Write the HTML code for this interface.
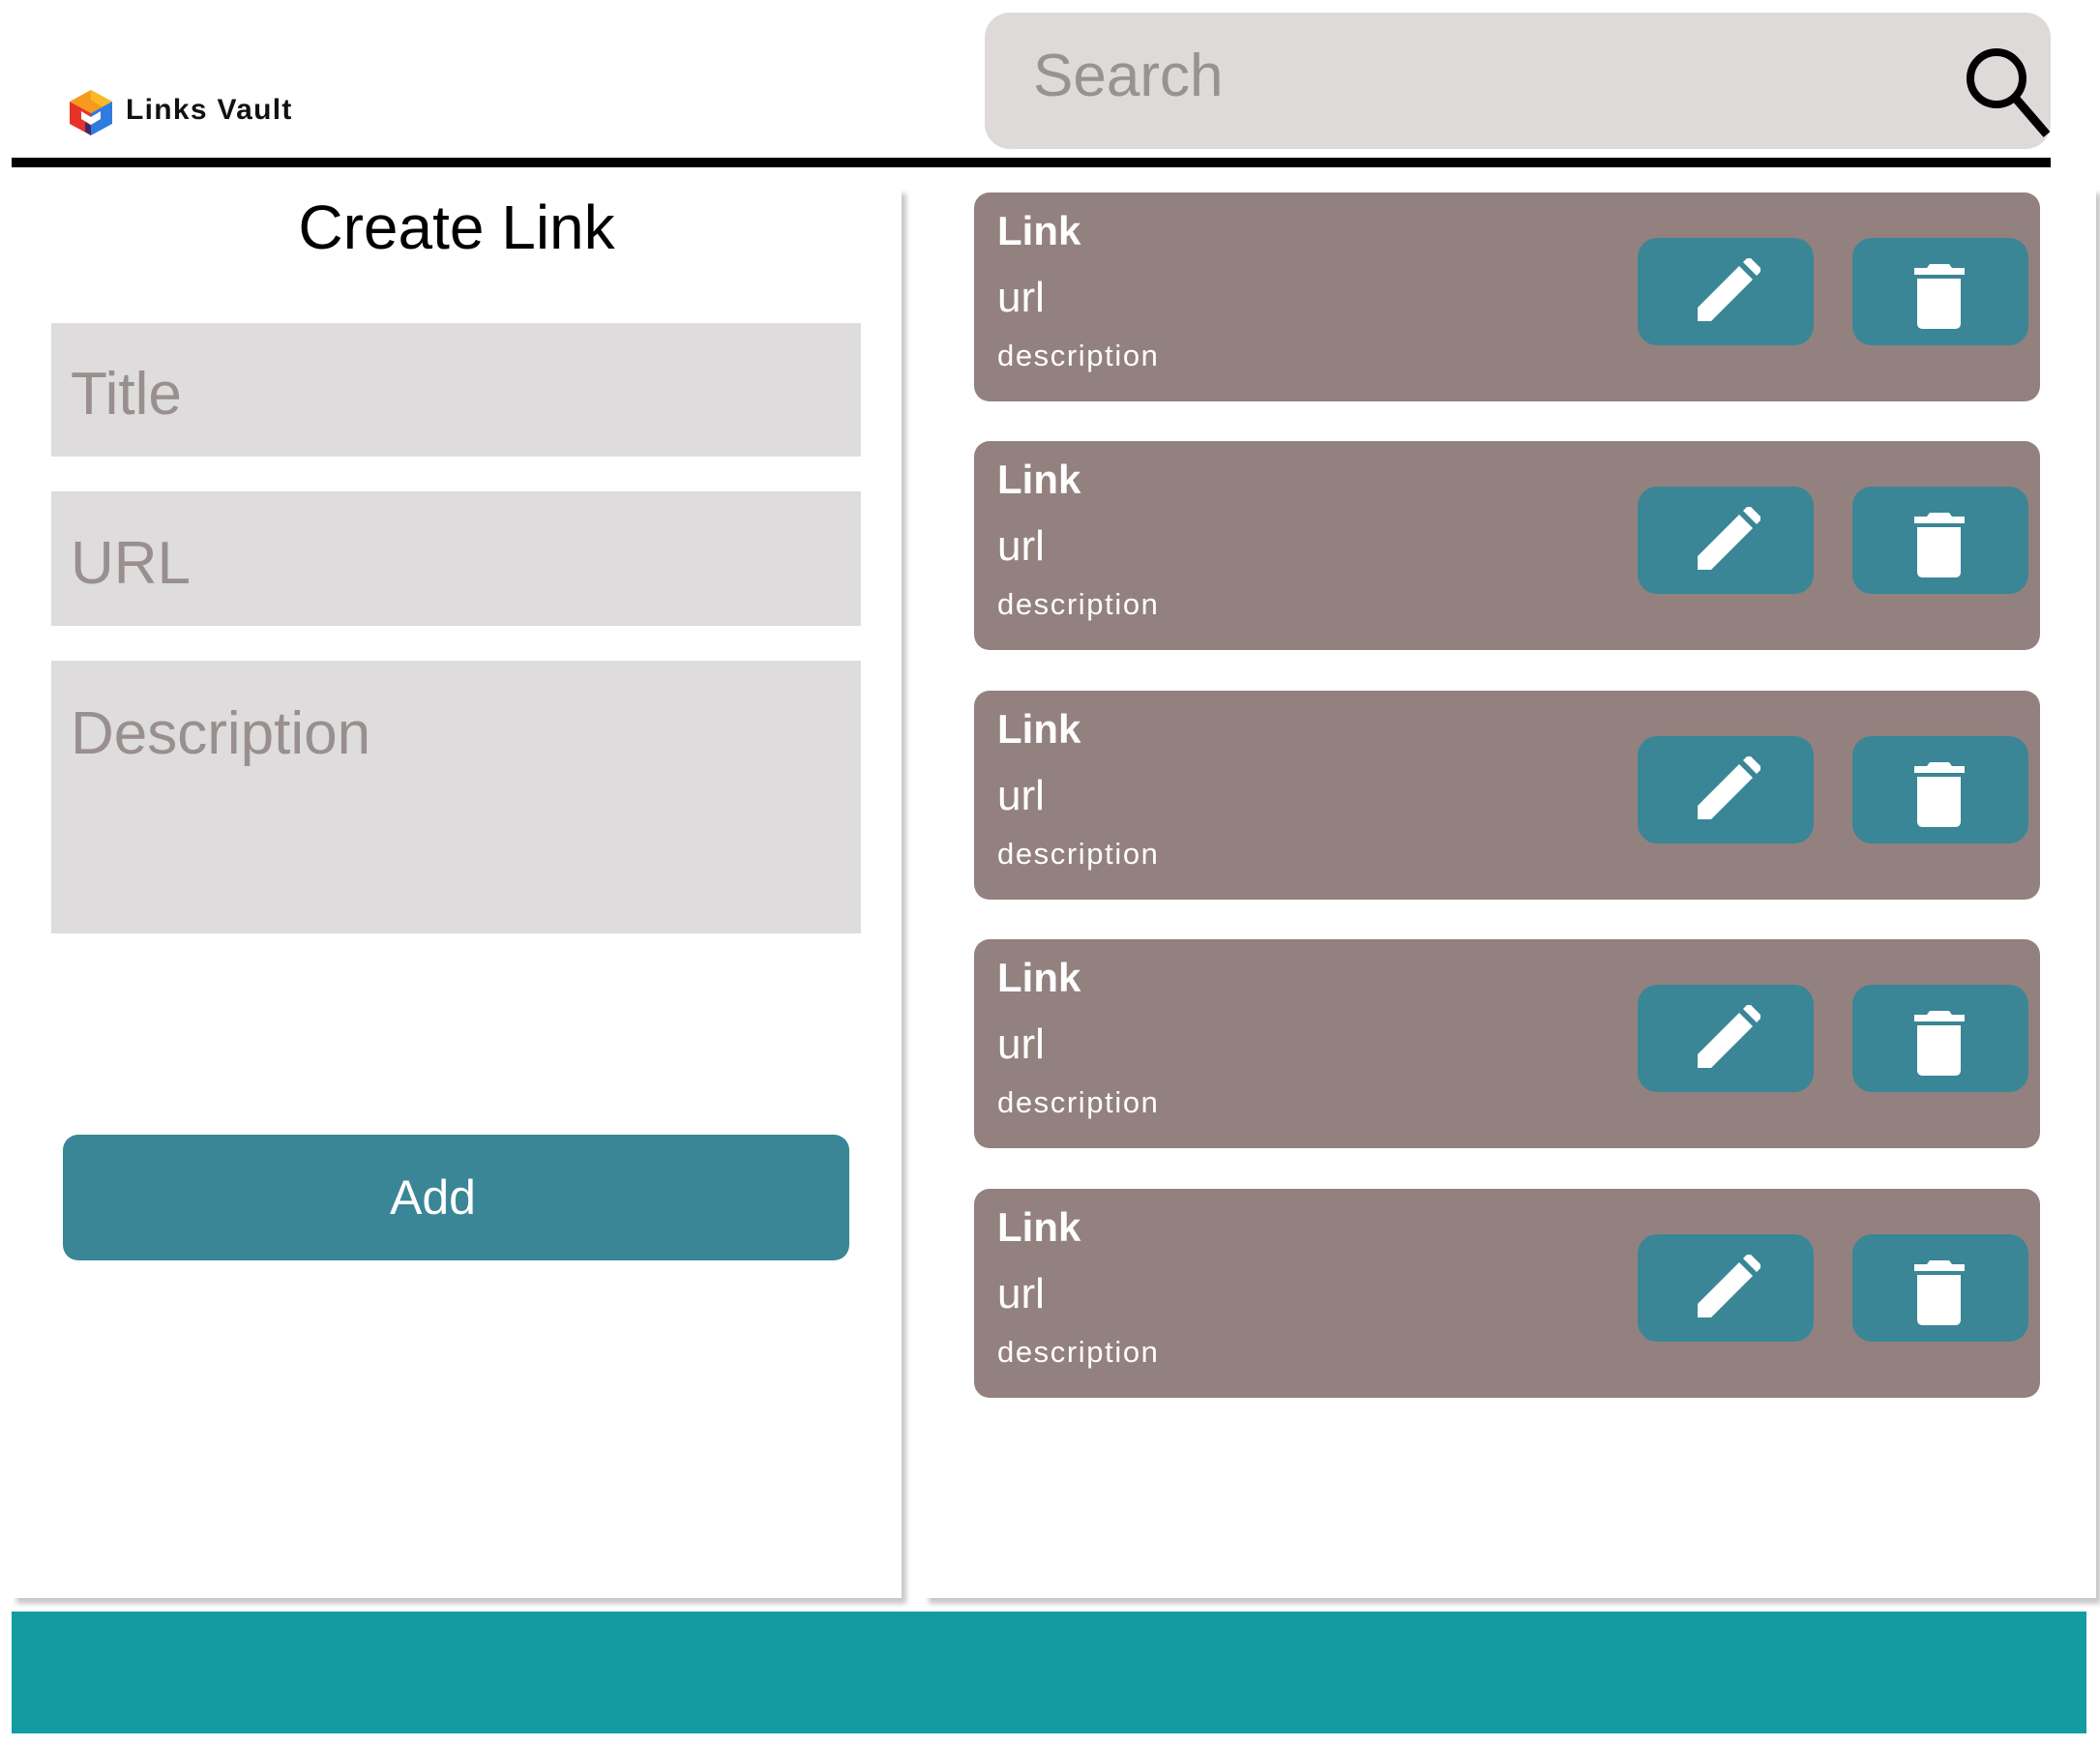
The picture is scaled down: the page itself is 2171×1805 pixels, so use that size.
<!DOCTYPE html>
<html><head><meta charset="utf-8"><style>
*{margin:0;padding:0;box-sizing:border-box}
body{width:2171px;height:1805px;background:#fff;position:relative;overflow:hidden;font-family:"Liberation Sans",sans-serif}
.abs{position:absolute}
.search{left:1018px;top:13px;width:1102px;height:141px;background:#dfdada;border-radius:26px}
.search span{position:absolute;left:50px;top:30px;font-size:62px;color:#989393}
.line{left:12px;top:163px;width:2108px;height:10px;background:#000}
.lp{left:12px;top:194px;width:920px;height:1458px;background:#fff;box-shadow:5px 6px 5px #c8c8c8}
.rp{left:955px;top:194px;width:1212px;height:1458px;background:#fff;box-shadow:5px 6px 5px #c8c8c8}
.inp{left:53px;width:837px;background:#dedcdd;color:#988f8e;font-size:62px;padding-left:20px}
.add{left:65px;top:1173px;width:813px;height:130px;background:#3a8696;border-radius:16px;color:#fff;font-size:50px;line-height:130px}
.add span{position:absolute;left:338px}
.card{left:1007px;width:1102px;height:216px;background:#93817f;border-radius:16px;color:#fff}
.card .t{position:absolute;left:24px;top:16px;font-size:42px;font-weight:bold}
.card .u{position:absolute;left:24px;top:84px;font-size:44px}
.card .d{position:absolute;left:24px;top:151px;font-size:31px;letter-spacing:1.6px}
.btn{position:absolute;top:47px;width:182px;height:111px;background:#3a8696;border-radius:20px}
.footer{left:12px;top:1666px;width:2145px;height:126px;background:#129ca2}
</style></head><body>
<svg class="abs" style="left:72px;top:93px" width="44" height="47" viewBox="0 0 44 47">
<polygon points="22,0 44,12 22,24 0,12" fill="#f59a1c"/>
<polygon points="22,0 44,12 34,18 22,10" fill="#fbb827"/>
<polygon points="0,12 22,24 22,47 0,35" fill="#e5332a"/>
<polygon points="44,12 44,35 22,47 22,24" fill="#2f7be0"/>
<polygon points="12,22 22,28 32,22 32,30 22,36 12,30" fill="#fff"/>
<polygon points="16,33 22,37 22,47 16,43" fill="#3a2a6a"/>
</svg>
<div class="abs" style="left:130px;top:97px;font-size:30px;font-weight:bold;color:#111;letter-spacing:1.3px">Links Vault</div>
<div class="abs search"><span>Search</span>
<svg style="position:absolute;left:1012px;top:34px" width="90" height="100" viewBox="0 0 90 100"><circle cx="34" cy="34" r="27" fill="none" stroke="#000" stroke-width="8"/><line x1="55" y1="56" x2="86" y2="92" stroke="#000" stroke-width="9"/></svg>
</div>
<div class="abs line"></div>
<div class="abs lp"></div>
<div class="abs rp"></div>
<div class="abs" style="left:12px;top:198px;width:920px;text-align:center;font-size:64px;color:#000">Create Link</div>
<div class="abs inp" style="top:334px;height:138px;line-height:148px">Title</div>
<div class="abs inp" style="top:508px;height:139px;line-height:149px">URL</div>
<div class="abs inp" style="top:683px;height:282px;padding-top:40px">Description</div>
<div class="abs add"><span>Add</span></div>

<div class="abs card" style="top:199px"><div class="t">Link</div><div class="u">url</div><div class="d">description</div>
<div class="btn" style="left:686px"><svg width="182" height="111"><polygon points="62,72 62,86 76,86 119,43 105,29" fill="#fff"/><polygon points="109,25 123,39 127,35 127,31 117,21 113,21" fill="#fff"/></svg></div>
<div class="btn" style="left:908px"><svg width="182" height="111"><path d="M77 31L80 27H100L103 31H116V38H64V31Z" fill="#fff"/><path d="M67 42H112V88Q112 94 106 94H73Q67 94 67 88Z" fill="#fff"/></svg></div></div>
<div class="abs card" style="top:456px"><div class="t">Link</div><div class="u">url</div><div class="d">description</div>
<div class="btn" style="left:686px"><svg width="182" height="111"><polygon points="62,72 62,86 76,86 119,43 105,29" fill="#fff"/><polygon points="109,25 123,39 127,35 127,31 117,21 113,21" fill="#fff"/></svg></div>
<div class="btn" style="left:908px"><svg width="182" height="111"><path d="M77 31L80 27H100L103 31H116V38H64V31Z" fill="#fff"/><path d="M67 42H112V88Q112 94 106 94H73Q67 94 67 88Z" fill="#fff"/></svg></div></div>
<div class="abs card" style="top:714px"><div class="t">Link</div><div class="u">url</div><div class="d">description</div>
<div class="btn" style="left:686px"><svg width="182" height="111"><polygon points="62,72 62,86 76,86 119,43 105,29" fill="#fff"/><polygon points="109,25 123,39 127,35 127,31 117,21 113,21" fill="#fff"/></svg></div>
<div class="btn" style="left:908px"><svg width="182" height="111"><path d="M77 31L80 27H100L103 31H116V38H64V31Z" fill="#fff"/><path d="M67 42H112V88Q112 94 106 94H73Q67 94 67 88Z" fill="#fff"/></svg></div></div>
<div class="abs card" style="top:971px"><div class="t">Link</div><div class="u">url</div><div class="d">description</div>
<div class="btn" style="left:686px"><svg width="182" height="111"><polygon points="62,72 62,86 76,86 119,43 105,29" fill="#fff"/><polygon points="109,25 123,39 127,35 127,31 117,21 113,21" fill="#fff"/></svg></div>
<div class="btn" style="left:908px"><svg width="182" height="111"><path d="M77 31L80 27H100L103 31H116V38H64V31Z" fill="#fff"/><path d="M67 42H112V88Q112 94 106 94H73Q67 94 67 88Z" fill="#fff"/></svg></div></div>
<div class="abs card" style="top:1229px"><div class="t">Link</div><div class="u">url</div><div class="d">description</div>
<div class="btn" style="left:686px"><svg width="182" height="111"><polygon points="62,72 62,86 76,86 119,43 105,29" fill="#fff"/><polygon points="109,25 123,39 127,35 127,31 117,21 113,21" fill="#fff"/></svg></div>
<div class="btn" style="left:908px"><svg width="182" height="111"><path d="M77 31L80 27H100L103 31H116V38H64V31Z" fill="#fff"/><path d="M67 42H112V88Q112 94 106 94H73Q67 94 67 88Z" fill="#fff"/></svg></div></div>

<div class="abs footer"></div>
</body></html>
